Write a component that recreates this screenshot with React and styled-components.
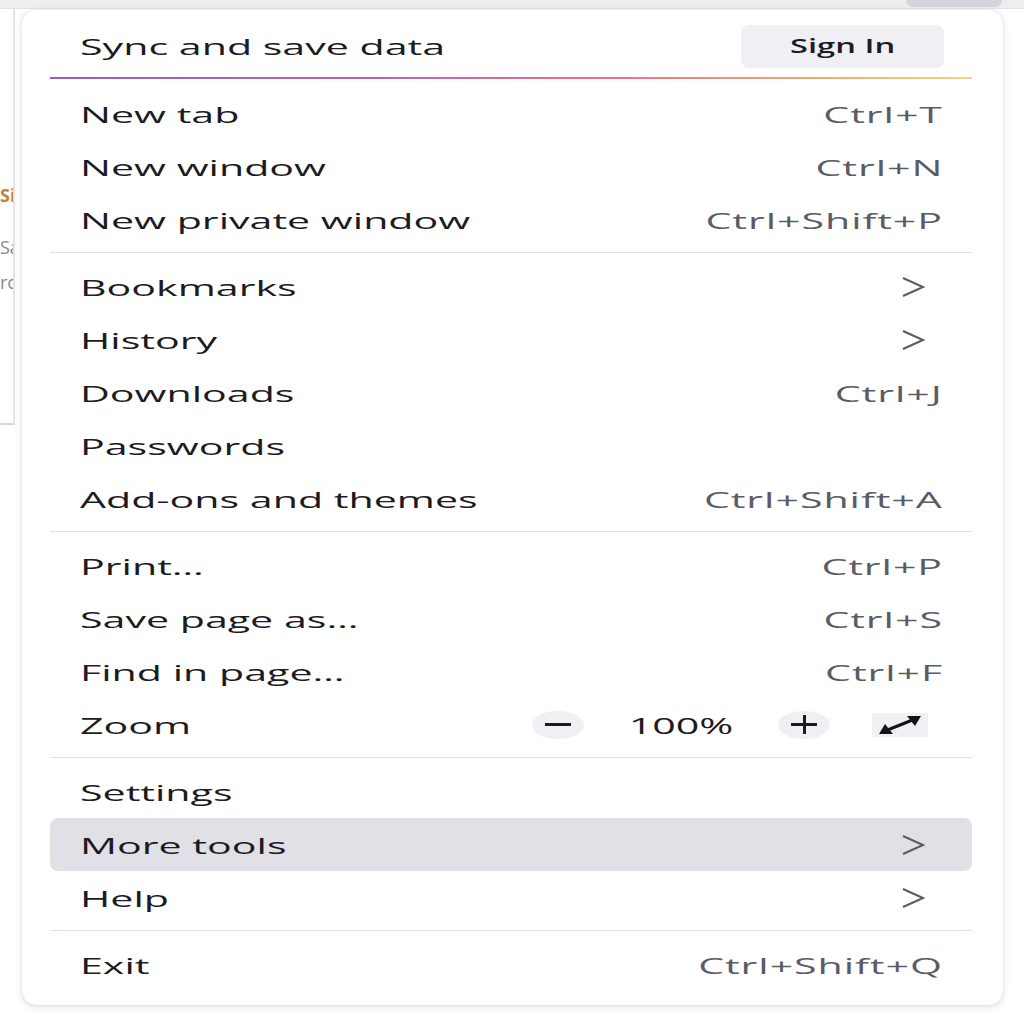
import React from "react";
import styled, { createGlobalStyle } from "styled-components";

const Global = createGlobalStyle`
  html, body { margin: 0; padding: 0; background: #fff; }
  body { font-family: "Open Sans", "Noto Sans", sans-serif; }
`;

const STRETCH = 1.87;

const sections = [
  [
    { label: "New tab", sc: "Ctrl+T" },
    { label: "New window", sc: "Ctrl+N" },
    { label: "New private window", sc: "Ctrl+Shift+P" },
  ],
  [
    { label: "Bookmarks", arrow: true },
    { label: "History", arrow: true },
    { label: "Downloads", sc: "Ctrl+J" },
    { label: "Passwords" },
    { label: "Add-ons and themes", sc: "Ctrl+Shift+A" },
  ],
  [
    { label: "Print…", sc: "Ctrl+P" },
    { label: "Save page as…", sc: "Ctrl+S" },
    { label: "Find in page…", sc: "Ctrl+F" },
    { label: "Zoom", zoom: true },
  ],
  [
    { label: "Settings" },
    { label: "More tools", arrow: true, active: true },
    { label: "Help", arrow: true },
  ],
  [{ label: "Exit", sc: "Ctrl+Shift+Q" }],
];

function Chevron() {
  return (
    <svg width="24" height="24" viewBox="0 0 24 24">
      <path d="M2 3 L22 12 L2 21" fill="none" stroke="#5b5b66" strokeWidth="2" />
    </svg>
  );
}

function ExpandIcon() {
  return (
    <svg width="46" height="22" viewBox="0 0 46 22">
      <line x1="8" y1="17" x2="38" y2="5" stroke="#15141a" strokeWidth="3" />
      <polygon points="44,2 30,2 38,12" fill="#15141a" />
      <polygon points="2,20 16,20 8,10" fill="#15141a" />
    </svg>
  );
}

export default function App() {
  return (
    <Page>
      <Global />
      <TopStrip>
        <TabStub />
      </TopStrip>
      <SideCard>
        <SideTitle>Si</SideTitle>
        <SideLine>Sa</SideLine>
        <SideLine>rc</SideLine>
      </SideCard>
      <Panel>
        <Header>
          <Label>Sync and save data</Label>
          <SignIn>
            <SignInText>Sign In</SignInText>
          </SignIn>
        </Header>
        <Gradient />
        {sections.map((items, si) => (
          <Section key={si}>
            {si > 0 && <Separator />}
            {items.map((it) => (
              <Row key={it.label} $active={it.active}>
                <Label>{it.label}</Label>
                {it.sc && <Shortcut>{it.sc}</Shortcut>}
                {it.arrow && (
                  <ArrowWrap>
                    <Chevron />
                  </ArrowWrap>
                )}
                {it.zoom && (
                  <ZoomControls>
                    <RoundBtn>
                      <MinusBar />
                    </RoundBtn>
                    <Percent>
                      <PercentText>100%</PercentText>
                    </Percent>
                    <RoundBtn>
                      <PlusSign />
                    </RoundBtn>
                    <ExpandBtn>
                      <ExpandIcon />
                    </ExpandBtn>
                  </ZoomControls>
                )}
              </Row>
            ))}
          </Section>
        ))}
      </Panel>
    </Page>
  );
}

const Page = styled.div`
  position: relative;
  width: 1024px;
  height: 1024px;
  overflow: hidden;
  background: #ffffff;
`;

const TopStrip = styled.div`
  height: 8px;
  background: #eeeef0;
  border-bottom: 1px solid #e2e2e6;
  display: flex;
  justify-content: flex-end;
  padding-right: 22px;
`;

const TabStub = styled.div`
  width: 96px;
  height: 7px;
  background: #d4d4da;
  border-radius: 0 0 8px 8px;
`;

const SideCard = styled.div`
  width: 15px;
  height: 416px;
  border-right: 2px solid #e4e4e8;
  border-bottom: 2px solid #d8d8dc;
  overflow: hidden;
  padding-top: 171px;
  box-sizing: border-box;
  font-size: 18px;
  white-space: nowrap;
`;

const SideTitle = styled.div`
  color: #c8803a;
  font-weight: 700;
  height: 52px;
  line-height: 30px;
`;

const SideLine = styled.div`
  color: #888;
  height: 35px;
  line-height: 30px;
`;

const Panel = styled.div`
  position: absolute;
  left: 22px;
  top: 10px;
  width: 981px;
  height: 995px;
  box-sizing: border-box;
  padding: 8px 31px 14px 28px;
  background: #ffffff;
  border-radius: 14px;
  box-shadow: 0 0 1px rgba(0, 0, 0, 0.25), 0 2px 8px rgba(0, 0, 0, 0.12);
  display: flex;
  flex-direction: column;
`;

const Header = styled.div`
  height: 56px;
  display: flex;
  align-items: center;
  justify-content: space-between;
  padding: 0 28px 0 30px;
`;

const Label = styled.span`
  display: inline-block;
  font-size: 22px;
  color: #1c1b22;
  white-space: nowrap;
  transform: scaleX(${STRETCH});
  transform-origin: left center;
`;

const SignIn = styled.div`
  width: 203px;
  height: 43px;
  border-radius: 8px;
  background: #f0f0f4;
  display: flex;
  align-items: center;
  justify-content: center;
`;

const SignInText = styled.span`
  display: inline-block;
  font-size: 19px;
  font-weight: 600;
  color: #1c1b22;
  transform: scaleX(1.72);
`;

const Gradient = styled.div`
  height: 2px;
  margin: 3px 0 8px;
  background: linear-gradient(90deg, #8a62c8 0%, #c162b0 35%, #e8708a 60%, #f2ae6a 85%, #f6d28a 100%);
`;

const Section = styled.div`
  display: flex;
  flex-direction: column;
`;

const Separator = styled.div`
  height: 1px;
  background: #e0e0e6;
  margin: 6px 0 7px;
`;

const Row = styled.div`
  height: 53px;
  display: flex;
  align-items: center;
  justify-content: space-between;
  padding: 0 29px 0 30px;
  border-radius: 8px;
  background: ${({ $active }) => ($active ? "#e0e0e6" : "transparent")};
`;

const Shortcut = styled.span`
  display: inline-block;
  font-size: 22px;
  color: #5b5b66;
  letter-spacing: 0.5px;
  white-space: nowrap;
  transform: scaleX(${STRETCH});
  transform-origin: right center;
`;

const ArrowWrap = styled.div`
  display: flex;
  margin-right: 18px;
`;

const ZoomControls = styled.div`
  display: flex;
  align-items: center;
  margin-right: 15px;
`;

const RoundBtn = styled.div`
  width: 52px;
  height: 28px;
  border-radius: 50%;
  background: #f0f0f4;
  display: flex;
  align-items: center;
  justify-content: center;
`;

const MinusBar = styled.div`
  width: 26px;
  height: 3px;
  background: #1c1b22;
`;

const PlusSign = styled.div`
  width: 26px;
  height: 3px;
  background: #1c1b22;
  position: relative;
  &::after {
    content: "";
    position: absolute;
    left: 11.5px;
    top: -8px;
    width: 3px;
    height: 19px;
    background: #1c1b22;
  }
`;

const Percent = styled.div`
  width: 194px;
  display: flex;
  justify-content: center;
`;

const PercentText = styled.span`
  display: inline-block;
  font-size: 22px;
  color: #1c1b22;
  transform: scaleX(${STRETCH});
`;

const ExpandBtn = styled.div`
  width: 56px;
  height: 24px;
  background: #f0f0f4;
  display: flex;
  align-items: center;
  justify-content: center;
  margin-left: 42px;
`;
